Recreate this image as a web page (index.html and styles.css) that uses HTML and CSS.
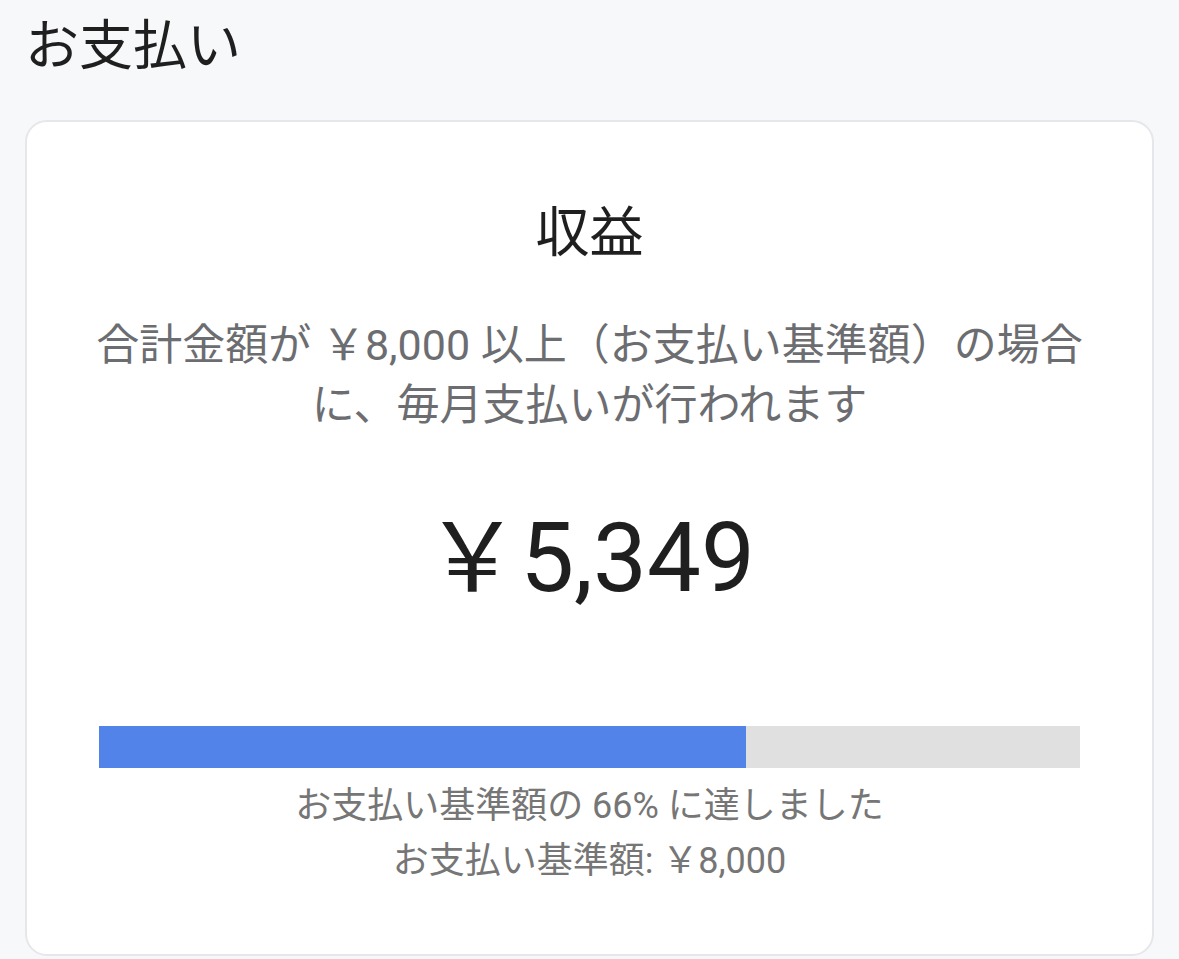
FILE: index.html
```html
<!DOCTYPE html>
<html lang="ja">
<head>
<meta charset="utf-8">
<title>お支払い</title>
<link rel="stylesheet" href="styles.css">
</head>
<body>
<main class="page">
  <h1 class="page-title">お支払い</h1>
  <section class="card">
    <h2 class="card-title">収益</h2>
    <p class="desc">合計金額が ￥8,000 以上（お支払い基準額）の場合に、毎月支払いが行われます</p>
    <div class="amount">￥5,349</div>
    <div class="bar"><div class="bar-fill" style="width:66%"></div></div>
    <p class="caption">お支払い基準額の 66% に達しました<br>お支払い基準額: ￥8,000</p>
  </section>
</main>
</body>
</html>
```
FILE: styles.css
```css
html, body {
  margin: 0;
  background: #f7f8fa;
}
body {
  font-family: Roboto, "Noto Sans CJK JP", sans-serif;
  color: #202124;
}
.page {
  padding: 0 25px 2px;
}
.page-title {
  margin: 0;
  padding-top: 15px;
  font-size: 54px;
  line-height: 64px;
  font-weight: 400;
  color: #1f1f1f;
}
.card {
  box-sizing: border-box;
  margin-top: 41px;
  background: #fff;
  border: 2px solid #e6e7eb;
  border-radius: 22px;
  padding: 80px 72px 40px;
  text-align: center;
  min-height: 836px;
}
.card-title {
  margin: 0;
  font-size: 54px;
  line-height: 64px;
  font-weight: 400;
  color: #1f1f1f;
}
.desc {
  margin: 49px -8px 0;
  font-size: 43px;
  line-height: 60px;
  color: #6c6d71;
}
.amount {
  margin-top: 63px;
  font-size: 96px;
  line-height: 120px;
  color: #1f1f1f;
}
.bar {
  margin-top: 108px;
  height: 42px;
  background: #e0e0e0;
}
.bar-fill {
  height: 100%;
  background: #5283e8;
}
.caption {
  margin: 11px 0 0;
  font-size: 36px;
  line-height: 55px;
  color: #767676;
}
```
